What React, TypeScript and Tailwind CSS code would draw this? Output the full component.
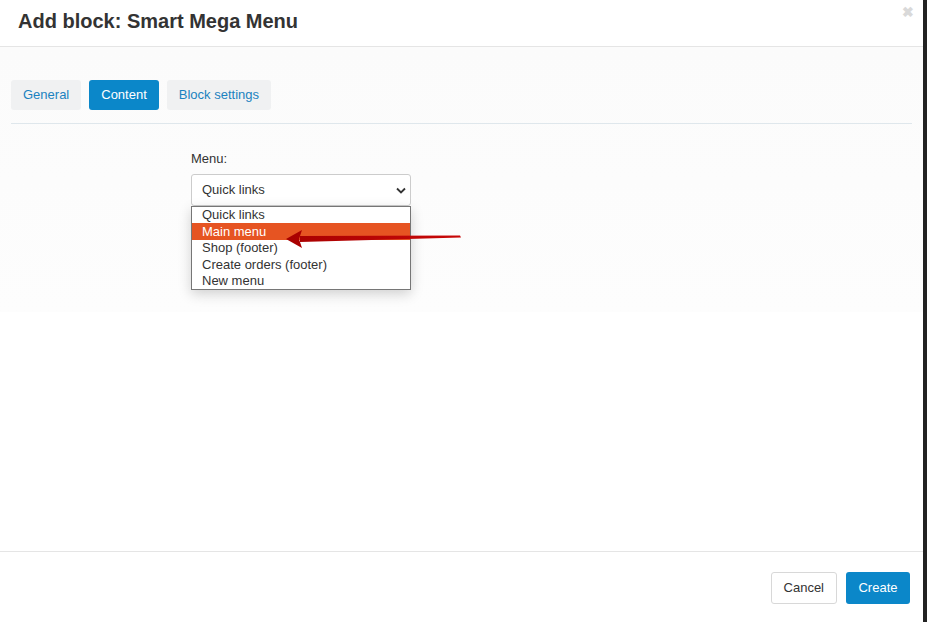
const tabs = [
  { label: "General", active: false },
  { label: "Content", active: true },
  { label: "Block settings", active: false },
]

const menus = ["Quick links", "Main menu", "Shop (footer)", "Create orders (footer)", "New menu"]

const App = () => {
  return (
    <div className="relative flex h-[622px] w-[927px] overflow-hidden bg-white font-['Liberation_Sans',Arial,sans-serif] text-[#333]">
      <div className="flex flex-1 flex-col">
        <div className="relative flex h-[47px] items-center border-b border-[#e5e5e5] px-[18px]">
          <h1 className="mt-[-4px] text-[20px] font-bold text-[#333]">Add block: Smart Mega Menu</h1>
          <span className="absolute right-[9px] top-[2px] text-[14px] font-bold text-[#d9d9d9]">✖</span>
        </div>

        <div className="flex h-[265px] flex-col bg-gradient-to-b from-[#fbfbfb] to-[#fdfdfd] px-[11px] pt-[33px]">
          <div className="flex gap-2 border-b border-[#dfe7ec] pb-[13px]">
            {tabs.map((tab) => (
              <div
                key={tab.label}
                className={`flex h-[30px] items-center rounded-[3px] px-3 text-[13px] ${
                  tab.active ? "bg-[#0b87c9] text-white" : "bg-[#f0f1f2] text-[#1a82c0]"
                }`}
              >
                {tab.label}
              </div>
            ))}
          </div>

          <div className="ml-[180px] mt-[25px] w-[220px]">
            <div className="text-[13px] text-[#333]">Menu:</div>
            <div className="mt-[5px] flex h-[32px] items-center justify-between rounded-[3px] border border-[#ccc] bg-white pl-[10px] pr-[2px] text-[13px]">
              <span>Quick links</span>
              <svg width="12" height="12" viewBox="0 0 12 12" className="mr-[1px]">
                <path d="M2 4.5 L6 8.5 L10 4.5" fill="none" stroke="#333" strokeWidth="1.8" />
              </svg>
            </div>
            <div className="relative z-10 flex flex-col border border-[#767676] bg-white shadow-[0_4px_12px_rgba(0,0,0,0.18)]">
              {menus.map((m, i) => (
                <div
                  key={m}
                  className={`flex h-[16.6px] items-center px-[10px] text-[13px] ${
                    i === 1 ? "bg-[#e65422] text-white" : "text-[#333]"
                  }`}
                >
                  {m}
                </div>
              ))}
            </div>
          </div>
        </div>

        <div className="flex-1" />

        <div className="flex h-[71px] items-start justify-end gap-[9px] border-t border-[#e5e5e5] pr-[13px] pt-5">
          <button className="h-[32px] rounded-[3px] border border-[#d8d8d8] bg-white px-3 text-[13px] text-[#333]">
            Cancel
          </button>
          <button className="h-[32px] w-[64px] rounded-[3px] bg-[#0b87c9] text-[13px] text-white">Create</button>
        </div>
      </div>
      <div className="w-[4px] bg-[#222]" />

      <svg className="pointer-events-none absolute left-0 top-0 z-20" width="927" height="622" viewBox="0 0 927 622">
        <defs>
          <linearGradient id="arr" x1="286" y1="0" x2="461" y2="0" gradientUnits="userSpaceOnUse">
            <stop offset="0" stopColor="#a80000" />
            <stop offset="1" stopColor="#c80808" />
          </linearGradient>
        </defs>
        <path d="M300 236 L460 235.5 L461 237.5 L300 242 Z" fill="url(#arr)" />
        <path d="M286 239 L302 230 L299 239 L302 248 Z" fill="url(#arr)" />
      </svg>
    </div>
  )
}

export default App
